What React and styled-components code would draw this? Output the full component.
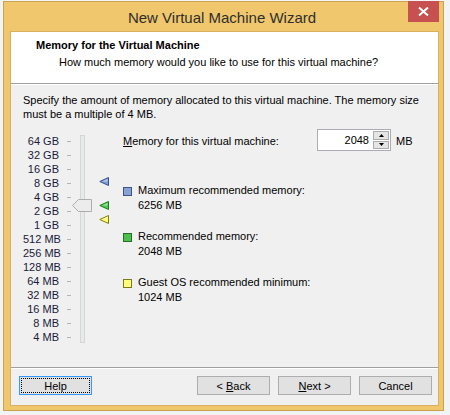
import styled, { createGlobalStyle } from "styled-components";

const GlobalStyle = createGlobalStyle`
    html, body {
        margin: 0;
        padding: 0;
        background: #f2f3f4;
    }
    body {
        font-family: "Liberation Sans", Arial, sans-serif;
        font-size: 11px;
        color: #000;
    }
`;

const sizes = [
    "64 GB", "32 GB", "16 GB", "8 GB", "4 GB", "2 GB", "1 GB",
    "512 MB", "256 MB", "128 MB", "64 MB", "32 MB", "16 MB", "8 MB", "4 MB",
];

const legend = [
    { title: "Maximum recommended memory:", value: "6256 MB", fill: "#86a2d6", edge: "#3f5480" },
    { title: "Recommended memory:", value: "2048 MB", fill: "#4cc04c", edge: "#23702a" },
    { title: "Guest OS recommended minimum:", value: "1024 MB", fill: "#ffff7a", edge: "#7a7a1e" },
];

// markers on the slider: top offset (px) inside the slider box
const markers = [
    { top: 48, fill: "#7f9dd6", edge: "#34508a" },
    { top: 72, fill: "#4ccc4c", edge: "#1c7a1c" },
    { top: 86, fill: "#ffff66", edge: "#7c7c10" },
];

function Arrow({ fill, edge, top }) {
    return (
        <Marker $top={top} width="10" height="9" viewBox="0 0 10 9">
            <path d="M9.5 0.5 L0.8 4.5 L9.5 8.5 Z" fill={fill} stroke={edge} strokeWidth="1" />
            <path d="M8.5 2 L3 4.5 L8.5 4.5 Z" fill="#ffffff" opacity="0.45" />
        </Marker>
    );
}

function App() {
    return (
        <>
            <GlobalStyle />
            <Window>
                <TitleBar>
                    <span />
                    <Title>New Virtual Machine Wizard</Title>
                    <CloseButton>
                        <svg width="11" height="9" viewBox="0 0 11 9">
                            <path d="M1 0.5 L10 8.5 M10 0.5 L1 8.5" stroke="#fff" strokeWidth="2" />
                        </svg>
                    </CloseButton>
                </TitleBar>
                <Client>
                    <Header>
                        <HeaderTitle>Memory for the Virtual Machine</HeaderTitle>
                        <HeaderSub>How much memory would you like to use for this virtual machine?</HeaderSub>
                    </Header>
                    <Etched />
                    <Body>
                        <Description>
                            Specify the amount of memory allocated to this virtual machine. The memory size
                            must be a multiple of 4 MB.
                        </Description>
                        <Main>
                            <Slider>
                                <Labels>
                                    {sizes.map(s => <Label key={s}>{s}</Label>)}
                                </Labels>
                                <Ticks>
                                    {sizes.map(s => <Tick key={s} />)}
                                </Ticks>
                                <Track />
                                <Thumb width="20" height="13" viewBox="0 0 20 13">
                                    <path d="M0.5 6.5 L6.5 0.5 L19.5 0.5 L19.5 12.5 L6.5 12.5 Z" fill="#ececec" stroke="#adadad" />
                                </Thumb>
                                {markers.map(m => <Arrow key={m.top} {...m} />)}
                            </Slider>
                            <Settings>
                                <MemoryRow>
                                    <MemoryLabel><u>M</u>emory for this virtual machine:</MemoryLabel>
                                    <SpinBox>
                                        <SpinValue>2048</SpinValue>
                                        <SpinButtons>
                                            <SpinButton>
                                                <svg width="5" height="3" viewBox="0 0 5 3"><path d="M0 3 L2.5 0 L5 3 Z" fill="#000" /></svg>
                                            </SpinButton>
                                            <SpinButton>
                                                <svg width="5" height="3" viewBox="0 0 5 3"><path d="M0 0 L2.5 3 L5 0 Z" fill="#000" /></svg>
                                            </SpinButton>
                                        </SpinButtons>
                                    </SpinBox>
                                    <Unit>MB</Unit>
                                </MemoryRow>
                                <Legend>
                                    {legend.map(item => (
                                        <LegendItem key={item.title}>
                                            <Swatch $fill={item.fill} $edge={item.edge} />
                                            <div>
                                                <LegendLine>{item.title}</LegendLine>
                                                <LegendLine>{item.value}</LegendLine>
                                            </div>
                                        </LegendItem>
                                    ))}
                                </Legend>
                            </Settings>
                        </Main>
                    </Body>
                    <Etched />
                    <Footer>
                        <Button $focused><FocusRing>Help</FocusRing></Button>
                        <Spacer />
                        <Button>{"< "}<u>B</u>ack</Button>
                        <Button><u>N</u>ext{" >"}</Button>
                        <Button>Cancel</Button>
                    </Footer>
                </Client>
            </Window>
        </>
    );
}

export default App;

const Window = styled.div`
    margin: 1px 0 0 3px;
    width: 441px;
    height: 410px;
    box-sizing: border-box;
    display: flex;
    flex-direction: column;
    background: #f0c76c;
    border: 1px solid #c9a24d;
`;

const TitleBar = styled.div`
    height: 30px;
    display: grid;
    grid-template-columns: 1fr auto 1fr;
    align-items: center;
`;

const Title = styled.div`
    font-size: 15px;
    color: #2e2e2e;
    padding-top: 1px;
    padding-right: 3px;
`;

const CloseButton = styled.div`
    justify-self: end;
    align-self: start;
    margin: -1px 4px 0 0;
    width: 31px;
    height: 21px;
    background: #c75050;
    display: flex;
    align-items: center;
    justify-content: center;
`;

const Client = styled.div`
    flex: 1;
    margin: 0 5px 5px 7px;
    display: flex;
    flex-direction: column;
    background: #f0f0f0;
    box-shadow: 0 0 0 1px #d8b060;
`;

const Header = styled.div`
    height: 51px;
    box-sizing: border-box;
    background: #ffffff;
    padding: 6px 0 0 25px;
`;

const HeaderTitle = styled.div`
    font-weight: bold;
    line-height: 14px;
`;

const HeaderSub = styled.div`
    line-height: 14px;
    margin: 3px 0 0 23px;
`;

const Etched = styled.div`
    height: 1px;
    background: #a0a0a0;
    border-bottom: 1px solid #ffffff;
`;

const Body = styled.div`
    flex: 1;
    padding: 8px 6px 0 12px;
`;

const Description = styled.div`
    line-height: 14px;
`;

const Main = styled.div`
    display: flex;
    margin-top: 8px;
`;

const Slider = styled.div`
    position: relative;
    display: flex;
    padding-top: 5px;
    width: 100px;
`;

const Labels = styled.div`
    width: 36px;
    text-align: right;
    color: #1a1a3a;
`;

const Label = styled.div`
    height: 14px;
    line-height: 14px;
    white-space: nowrap;
`;

const Ticks = styled.div`
    margin-left: 8px;
    width: 4px;
`;

const Tick = styled.div`
    height: 14px;
    display: flex;
    align-items: center;
    &::after {
        content: "";
        display: block;
        width: 4px;
        height: 1px;
        background: #b4b4b4;
    }
`;

const Track = styled.div`
    margin: 1px 0 0 9px;
    width: 3px;
    height: 206px;
    background: #e7eaea;
    border: 1px solid #d6d6d6;
`;

const Thumb = styled.svg`
    position: absolute;
    left: 49px;
    top: 70px;
`;

const Marker = styled.svg`
    position: absolute;
    left: 76px;
    top: ${p => p.$top}px;
`;

const Settings = styled.div`
    flex: 1;
    display: flex;
    flex-direction: column;
`;

const MemoryRow = styled.div`
    display: flex;
    align-items: center;
    height: 22px;
`;

const MemoryLabel = styled.div`
    width: 194px;
    padding-top: 1px;
`;

const SpinBox = styled.div`
    width: 74px;
    height: 22px;
    box-sizing: border-box;
    display: flex;
    align-items: center;
    background: #ffffff;
    border: 1px solid #abadb3;
`;

const SpinValue = styled.div`
    flex: 1;
    text-align: right;
    padding-right: 4px;
`;

const SpinButtons = styled.div`
    width: 16px;
    height: 18px;
    margin-right: 1px;
    display: flex;
    flex-direction: column;
    gap: 1px;
`;

const SpinButton = styled.div`
    flex: 1;
    display: flex;
    align-items: center;
    justify-content: center;
    background: #e5e5e5;
    border: 1px solid #acacac;
`;

const Unit = styled.div`
    margin-left: 5px;
    padding-top: 1px;
`;

const Legend = styled.div`
    display: flex;
    flex-direction: column;
    gap: 16px;
    margin-top: 32px;
`;

const LegendItem = styled.div`
    display: flex;
    align-items: flex-start;
    gap: 6px;
`;

const Swatch = styled.div`
    width: 7px;
    height: 7px;
    margin-top: 4px;
    background: ${p => p.$fill};
    border: 1px solid ${p => p.$edge};
`;

const LegendLine = styled.div`
    line-height: 15px;
`;

const Footer = styled.div`
    height: 36px;
    box-sizing: border-box;
    display: flex;
    align-items: flex-start;
    gap: 8px;
    padding: 7px 6px 0 8px;
`;

const Spacer = styled.div`
    flex: 1;
`;

const Button = styled.div`
    width: 73px;
    height: 19px;
    box-sizing: border-box;
    display: flex;
    align-items: center;
    justify-content: center;
    white-space: pre;
    background: #e1e1e1;
    border: 1px solid ${p => (p.$focused ? "#3399ff" : "#adadad")};
    padding: ${p => (p.$focused ? "1px" : "0")};
`;

const FocusRing = styled.div`
    width: 100%;
    height: 100%;
    box-sizing: border-box;
    display: flex;
    align-items: center;
    justify-content: center;
    border: 1px dotted #000;
`;
